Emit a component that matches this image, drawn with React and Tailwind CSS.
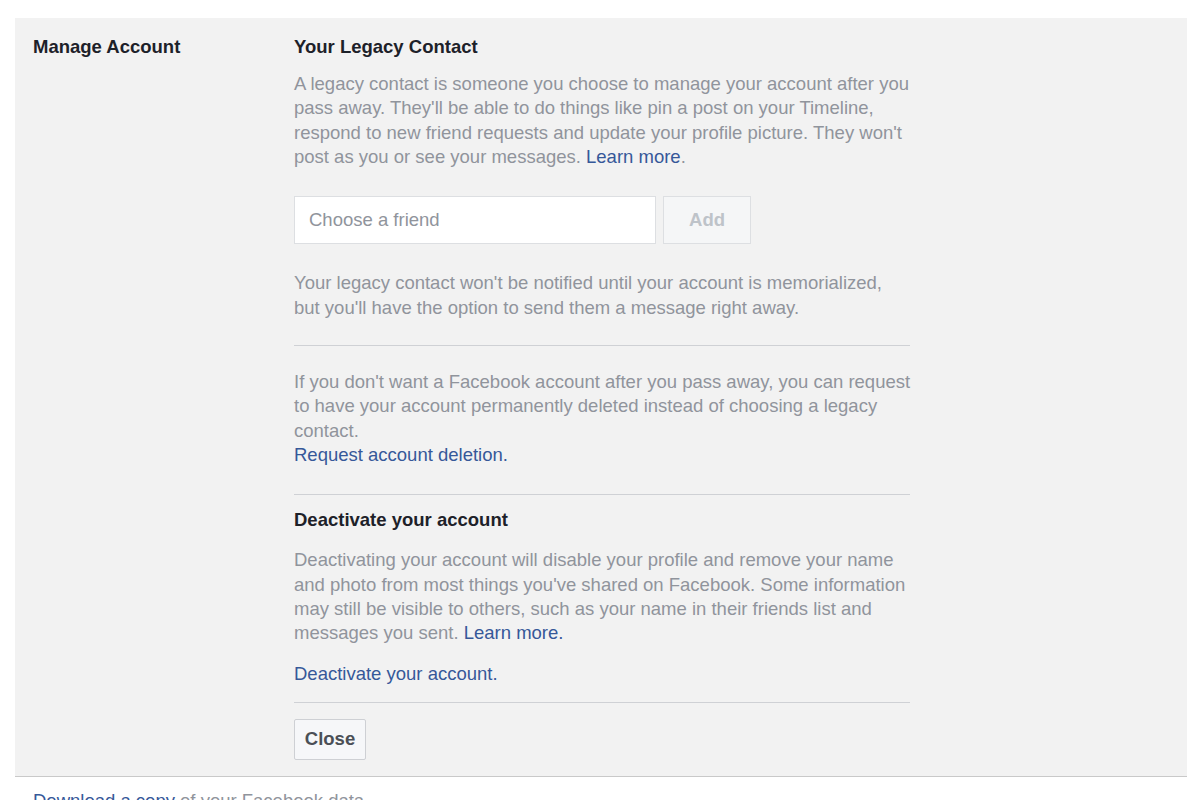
export default function App() {
  const font = { fontFamily: '"Liberation Sans", Arial, sans-serif' };
  return (
    <div className="w-[1200px] h-[800px] overflow-hidden bg-white" style={font}>
      <div className="pt-[18px] pl-[15px] pr-[13px]">
        <div className="bg-[#f2f2f2] border-b border-[#c9c9c9] flex pl-[18px] pt-[17px] pb-[16px]">
          <div className="w-[261px] shrink-0 text-[18.5px] leading-[24px] font-bold text-[#1d2129]">Manage Account</div>
          <div className="w-[616px] text-[18.5px]">
            <div className="font-bold text-[#1d2129] leading-[24px]">Your Legacy Contact</div>
            <p className="w-[624px] mt-[13px] text-[#90949c] leading-[24.3px]">
              A legacy contact is someone you choose to manage your account after you pass away. They'll be able to do things like pin a post on your Timeline, respond to new friend requests and update your profile picture. They won't post as you or see your messages. <span className="text-[#365899]">Learn more</span>.
            </p>
            <div className="mt-[27px] flex gap-[7px]">
              <div className="w-[362px] h-[48px] bg-white border border-[#dddfe2] flex items-center pl-[14px] text-[#90949c]">Choose a friend</div>
              <div className="w-[88px] h-[48px] bg-[#f5f6f7] border border-[#dddfe2] flex items-center justify-center font-bold text-[#bec3c9]">Add</div>
            </div>
            <p className="w-[600px] mt-[26px] text-[#90949c] leading-[25px]">
              Your legacy contact won't be notified until your account is memorialized, but you'll have the option to send them a message right away.
            </p>
            <div className="mt-[25px] h-px bg-[#cfd1d5]" />
            <p className="w-[624px] mt-[24px] text-[#90949c] leading-[24.3px]">
              If you don't want a Facebook account after you pass away, you can request to have your account permanently deleted instead of choosing a legacy contact.
              <br />
              <span className="text-[#365899]">Request account deletion.</span>
            </p>
            <div className="mt-[27px] h-px bg-[#cfd1d5]" />
            <div className="mt-[13px] font-bold text-[#1d2129] leading-[24px]">Deactivate your account</div>
            <p className="w-[624px] mt-[16px] text-[#90949c] leading-[24.3px]">
              Deactivating your account will disable your profile and remove your name and photo from most things you've shared on Facebook. Some information may still be visible to others, such as your name in their friends list and messages you sent. <span className="text-[#365899]">Learn more.</span>
            </p>
            <p className="mt-[16px] text-[#365899] leading-[24.3px]">Deactivate your account.</p>
            <div className="mt-[16px] h-px bg-[#cfd1d5]" />
            <div className="mt-[16px] flex">
              <div className="w-[72px] h-[41px] bg-[#f6f7f9] border border-[#ced0d4] rounded-[2px] flex items-center justify-center font-bold text-[#4b4f56]">Close</div>
            </div>
          </div>
        </div>
        <div className="pl-[18px] pt-[12px] text-[18.5px] leading-[24px]">
          <span className="text-[#365899]">Download a copy</span>
          <span className="text-[#90949c]"> of your Facebook data.</span>
        </div>
      </div>
    </div>
  );
}
